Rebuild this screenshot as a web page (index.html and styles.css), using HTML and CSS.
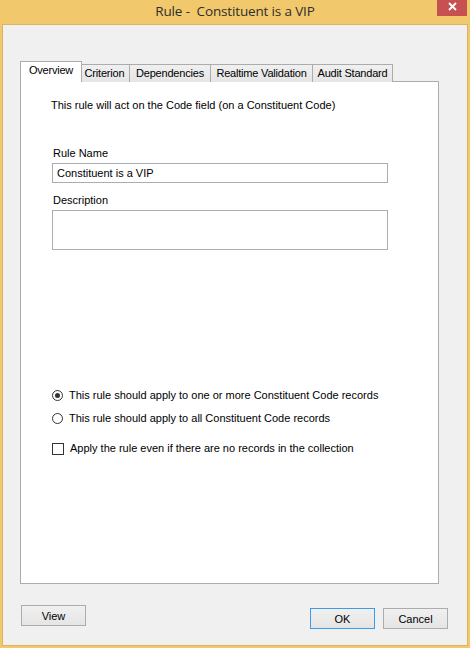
FILE: index.html
```html
<!DOCTYPE html>
<html>
<head>
    <title>Rule - Constituent is a VIP</title>
    <link rel="stylesheet" href="styles.css">
</head>
<body>
    <div class="window">
        <div class="titlebar">
            <span class="title">Rule -&nbsp; Constituent is a VIP</span>
            <button class="close_button">
                <svg width="30" height="16" viewBox="0 0 30 16">
                    <path d="M12 3 L19 10 M19 3 L12 10" stroke="#fff" stroke-width="1.9" fill="none"/>
                </svg>
            </button>
        </div>

        <div class="client">
            <div class="tab_control">
                <div class="tab_strip">
                    <span class="tab active tab_overview">Overview</span>
                    <span class="tab tab_criterion">Criterion</span>
                    <span class="tab tab_dependencies">Dependencies</span>
                    <span class="tab tab_realtime">Realtime Validation</span>
                    <span class="tab tab_audit">Audit Standard</span>
                </div>
                <div class="tab_page">
                    <p class="intro">This rule will act on the Code field (on a Constituent Code)</p>

                    <div class="field first">
                        <label class="field_label">Rule Name</label>
                        <input type="text" class="text_input" value="Constituent is a VIP">
                    </div>
                    <div class="field">
                        <label class="field_label">Description</label>
                        <textarea class="text_area"></textarea>
                    </div>

                    <div class="options">
                        <label class="option"><input type="radio" name="scope" class="radio" checked>This rule should apply to one or more Constituent Code records</label>
                        <label class="option"><input type="radio" name="scope" class="radio">This rule should apply to all Constituent Code records</label>
                        <label class="option check_row"><input type="checkbox" class="checkbox">Apply the rule even if there are no records in the collection</label>
                    </div>
                </div>
            </div>

            <div class="dialog_buttons">
                <button class="btn view_btn">View</button>
                <div class="btn_group">
                    <button class="btn default">OK</button>
                    <button class="btn">Cancel</button>
                </div>
            </div>
        </div>
    </div>
</body>
</html>
```

FILE: styles.css
```css
html, body {
    margin: 0;
    padding: 0;
}
body {
    width: 470px;
    height: 648px;
    background-color: #f1c96c;
    font-family: "Liberation Sans", Arial, sans-serif;
    font-size: 11px;
    color: #000;
}
.window {
    box-sizing: border-box;
    height: 648px;
    padding: 0 2px 2px 2px;
    display: flex;
    flex-direction: column;
}

/* title bar */
.titlebar {
    height: 24px;
    display: grid;
    grid-template-columns: 1fr auto 1fr;
}
.title {
    grid-column: 2;
    align-self: center;
    font-family: "Open Sans", "Liberation Sans", sans-serif;
    font-size: 13.5px;
    letter-spacing: -0.15px;
    color: #2e2e2e;
    white-space: nowrap;
    margin-top: -2px;
}
.close_button {
    grid-column: 3;
    justify-self: end;
    align-self: start;
    width: 30px;
    height: 16px;
    margin-right: 1px;
    padding: 0;
    border: none;
    background-color: #c75050;
    display: block;
}
.close_button svg {
    display: block;
}

/* client area */
.client {
    flex: 1;
    background-color: #f0f0f0;
    border: 1px solid #d9b463;
    padding: 36px 19px 0 17px;
}
.tab_control {
    margin-right: 9px;
}
.tab_strip {
    display: flex;
    align-items: flex-end;
    height: 21px;
    padding-left: 2px;
    margin-bottom: -1px;
}
.tab {
    box-sizing: border-box;
    height: 18px;
    line-height: 16px;
    text-align: center;
    letter-spacing: -0.2px;
    border: 1px solid #acacac;
    border-bottom: none;
    background: linear-gradient(#f0f0f0, #e5e5e5);
    margin-right: -1px;
    white-space: nowrap;
}
.tab.active {
    position: relative;
    z-index: 1;
    height: 21px;
    line-height: 17px;
    margin: 0 -3px 0 -2px;
    background: #fff;
}
.tab_overview { width: 62px; }
.tab_criterion { width: 51px; }
.tab_dependencies { width: 82px; }
.tab_realtime { width: 103px; }
.tab_audit { width: 81px; }

.tab_page {
    box-sizing: border-box;
    height: 503px;
    background: #fff;
    border: 1px solid #acacac;
    padding: 17px 0 0 31px;
}
.intro {
    margin: 0 0 0 -1px;
    line-height: 13px;
}
.field {
    margin-top: 11px;
}
.field.first {
    margin-top: 35px;
}
.field_label {
    display: block;
    line-height: 13px;
    padding-left: 1px;
    margin-bottom: 3px;
}
.text_input, .text_area {
    display: block;
    box-sizing: border-box;
    width: 336px;
    margin: 0;
    border: 1px solid #abadb3;
    background: #fff;
    font-family: "Liberation Sans", Arial, sans-serif;
    font-size: 11px;
    color: #000;
    outline: none;
}
.text_input {
    height: 20px;
    padding: 0 4px;
}
.text_area {
    height: 40px;
    resize: none;
    padding: 2px 4px;
}

/* options */
.options {
    margin-top: 139px;
}
.option {
    display: flex;
    align-items: center;
    gap: 6px;
    height: 13px;
    line-height: 13px;
    margin-bottom: 10px;
}
.option.check_row {
    margin-top: 17px;
}
.radio, .checkbox {
    appearance: none;
    -webkit-appearance: none;
    margin: 0;
    flex: none;
    background: #fff;
    border: 1px solid #333;
}
.radio {
    width: 11px;
    height: 11px;
    border-radius: 50%;
    display: grid;
    place-content: center;
}
.radio:checked::before {
    content: "";
    width: 5px;
    height: 5px;
    border-radius: 50%;
    background: #333;
}
.checkbox {
    width: 12px;
    height: 12px;
    margin-top: 1px;
}

/* bottom buttons */
.dialog_buttons {
    display: flex;
    justify-content: space-between;
    align-items: flex-start;
    margin-top: 21px;
}
.btn {
    box-sizing: border-box;
    width: 65px;
    height: 21px;
    padding: 0;
    border: 1px solid #acacac;
    background: linear-gradient(#f0f0f0, #e5e5e5);
    font-family: "Liberation Sans", Arial, sans-serif;
    font-size: 11px;
    color: #000;
}
.view_btn {
    margin-left: 1px;
}
.btn_group {
    display: flex;
    gap: 8px;
    margin-top: 3px;
}
.btn.default {
    border-color: #3c9be8;
}
```
